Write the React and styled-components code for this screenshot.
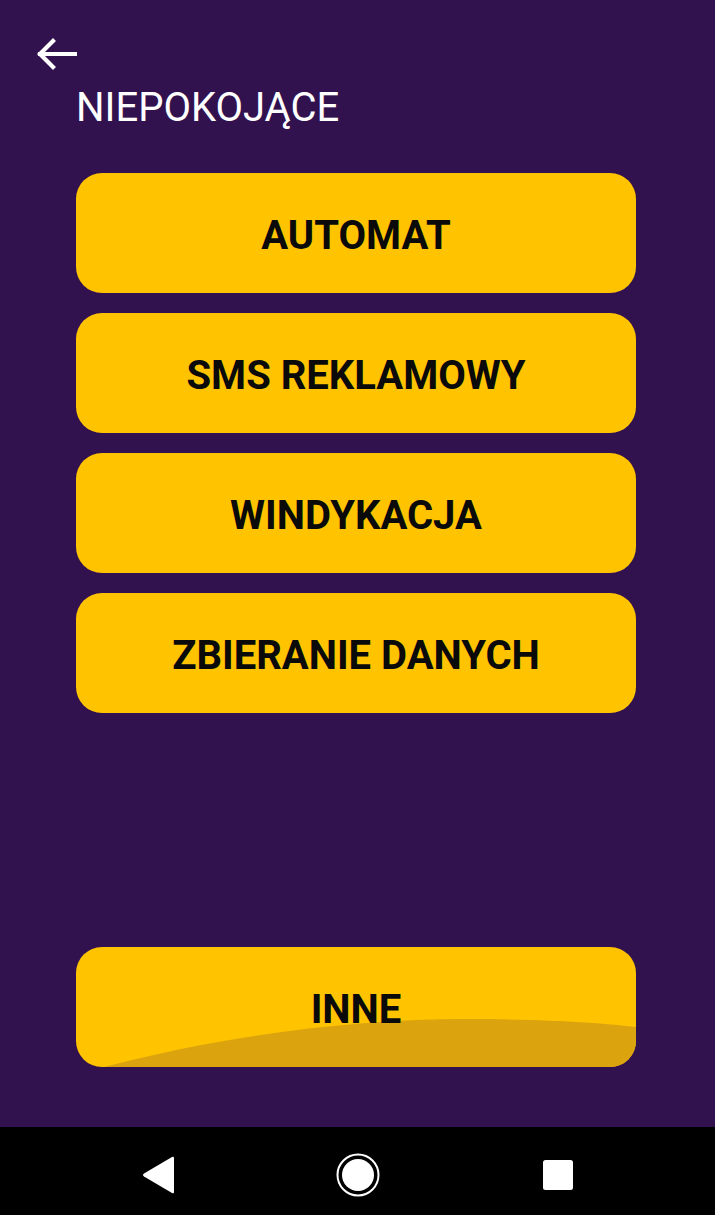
import React from "react";
import styled, { createGlobalStyle } from "styled-components";

const GlobalStyle = createGlobalStyle`
  html, body { margin: 0; padding: 0; background: #31124f; }
  body { font-family: Roboto, "Liberation Sans", sans-serif; }
`;

const Screen = styled.div`
  width: 715px;
  height: 1215px;
  display: flex;
  flex-direction: column;
  background: #31124f;
  overflow: hidden;
`;

const Content = styled.div`
  flex: 1;
  display: flex;
  flex-direction: column;
  padding: 0 79px 60px 76px;
`;

const BackButton = styled.button`
  width: 44px;
  height: 44px;
  margin: 32px 0 0 -42px;
  padding: 0;
  background: none;
  border: none;
  display: flex;
  align-items: center;
  justify-content: center;
`;

const Title = styled.h1`
  margin: 8px 0 0;
  padding-left: 0;
  font-size: 40px;
  line-height: 47px;
  font-weight: 400;
  color: #ffffff;
`;

const List = styled.div`
  display: flex;
  flex-direction: column;
  gap: 20px;
  margin-top: 42px;
  flex: 1;
`;

const Option = styled.button`
  position: relative;
  height: 120px;
  width: 560px;
  border: none;
  border-radius: 26px;
  background: #ffc300;
  color: #0a0a0a;
  font-family: Roboto, "Liberation Sans", sans-serif;
  font-weight: 700;
  font-size: 40px;
  overflow: hidden;
  padding: 4px 0 0;
  margin-top: ${(p) => (p.$pushed ? "auto" : "0")};
`;

const Label = styled.span`
  position: relative;
  z-index: 1;
`;

const Wave = styled.svg`
  position: absolute;
  left: 0;
  bottom: 0;
  width: 100%;
  height: 48px;
`;

const NavBar = styled.div`
  height: 88px;
  box-sizing: border-box;
  padding-top: 8px;
  background: #000;
  display: flex;
  align-items: center;
  justify-content: center;
  gap: 140px;
`;

const NavItem = styled.div`
  width: 60px;
  display: flex;
  justify-content: center;
`;

const options = ["AUTOMAT", "SMS REKLAMOWY", "WINDYKACJA", "ZBIERANIE DANYCH"];

export default function App() {
  return (
    <Screen>
      <GlobalStyle />
      <Content>
        <BackButton aria-label="back">
          <svg width="42" height="34" viewBox="0 0 42 34">
            <path
              d="M40 17H5M18 4L5 17l13 13"
              fill="none"
              stroke="#fff"
              strokeWidth="4.2"
              strokeLinecap="square"
            />
          </svg>
        </BackButton>
        <Title>NIEPOKOJĄCE</Title>
        <List>
          {options.map((o) => (
            <Option key={o}>
              <Label>{o}</Label>
            </Option>
          ))}
          <Option $pushed>
            <Wave viewBox="0 0 560 48" preserveAspectRatio="none">
              <path
                d="M28 48 C150 16 280 0 390 0 C470 0 530 4 560 8 L560 48 Z"
                fill="#dba40f"
              />
            </Wave>
            <Label>INNE</Label>
          </Option>
        </List>
      </Content>
      <NavBar>
        <NavItem>
          <svg width="36" height="40" viewBox="0 0 36 40">
            <path d="M34 3 L34 37 Q34 39 32 38 L4 21.5 Q2 20 4 18.5 L32 2 Q34 1 34 3 Z" fill="#fff" />
          </svg>
        </NavItem>
        <NavItem>
          <svg width="46" height="46" viewBox="0 0 46 46">
            <circle cx="23" cy="23" r="20.5" fill="none" stroke="#fff" strokeWidth="2" />
            <circle cx="23" cy="23" r="16" fill="#fff" />
          </svg>
        </NavItem>
        <NavItem>
          <svg width="32" height="32" viewBox="0 0 32 32">
            <rect x="1" y="1" width="30" height="30" rx="2.5" fill="#fff" />
          </svg>
        </NavItem>
      </NavBar>
    </Screen>
  );
}
